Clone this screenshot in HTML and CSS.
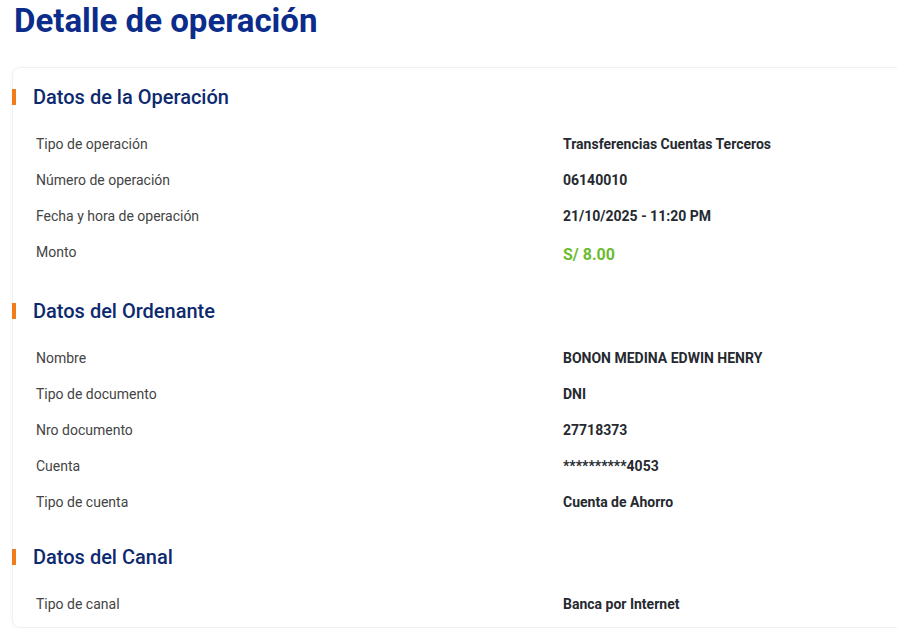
FILE: index.html
```html
<!DOCTYPE html>
<html lang="es">
<head>
    <meta charset="UTF-8">
    <meta name="viewport" content="width=device-width, initial-scale=1.0">
    <title>Detalle de operación</title>
    <link rel="stylesheet" href="styles.css">
</head>
<body>
    <h1 class="page-title">Detalle de operación</h1>

    <div class="card">
        <section class="block block-op">
            <h2 class="block-title">Datos de la Operación</h2>
            <div class="rows">
                <div class="label">Tipo de operación</div>
                <div class="value">Transferencias Cuentas Terceros</div>
                <div class="label">Número de operación</div>
                <div class="value">06140010</div>
                <div class="label">Fecha y hora de operación</div>
                <div class="value">21/10/2025 - 11:20 PM</div>
                <div class="label">Monto</div>
                <div class="value amount">S/ 8.00</div>
            </div>
        </section>

        <section class="block">
            <h2 class="block-title">Datos del Ordenante</h2>
            <div class="rows">
                <div class="label">Nombre</div>
                <div class="value">BONON MEDINA EDWIN HENRY</div>
                <div class="label">Tipo de documento</div>
                <div class="value">DNI</div>
                <div class="label">Nro documento</div>
                <div class="value">27718373</div>
                <div class="label">Cuenta</div>
                <div class="value">**********4053</div>
                <div class="label">Tipo de cuenta</div>
                <div class="value">Cuenta de Ahorro</div>
            </div>
        </section>

        <section class="block">
            <h2 class="block-title">Datos del Canal</h2>
            <div class="rows">
                <div class="label">Tipo de canal</div>
                <div class="value">Banca por Internet</div>
            </div>
        </section>
    </div>
</body>
</html>
```

FILE: styles.css
```css
body {
    font-family: Roboto, "Noto Sans", sans-serif;
    margin: 0;
    padding: 0 0 0 12px;
    background: #fff;
    overflow: hidden;
}

.page-title {
    margin: 0;
    padding: 2px 0 0 2px;
    font-size: 33px;
    line-height: 38px;
    font-weight: 700;
    color: #0b2c8a;
}

.card {
    margin-top: 27px;
    width: 1100px;
    border: 1px solid #eef0f2;
    border-radius: 8px;
    box-shadow: 0 1px 4px rgba(0, 0, 0, 0.05);
    padding: 21px 0 5px 0;
}

.block {
    margin-bottom: 29px;
}

.block-op {
    margin-bottom: 33px;
}

.block:last-child {
    margin-bottom: 0;
}

.block-title {
    margin: 0 0 0 -1px;
    padding-left: 17px;
    border-left: 4px solid #f07d1a;
    font-size: 20px;
    line-height: 16px;
    font-weight: 500;
    color: #0d2a6e;
    height: 16px;
    display: flex;
    align-items: center;
}

.rows {
    display: grid;
    grid-template-columns: 527px 1fr;
    grid-auto-rows: 36px;
    padding: 21px 0 0 23px;
    align-items: center;
}

.label {
    font-size: 14px;
    color: #444;
}

.value {
    font-size: 14px;
    font-weight: 700;
    color: #262a30;
}

.value.amount {
    font-size: 16px;
    color: #6cbb2e;
    padding-top: 4px;
}
```
